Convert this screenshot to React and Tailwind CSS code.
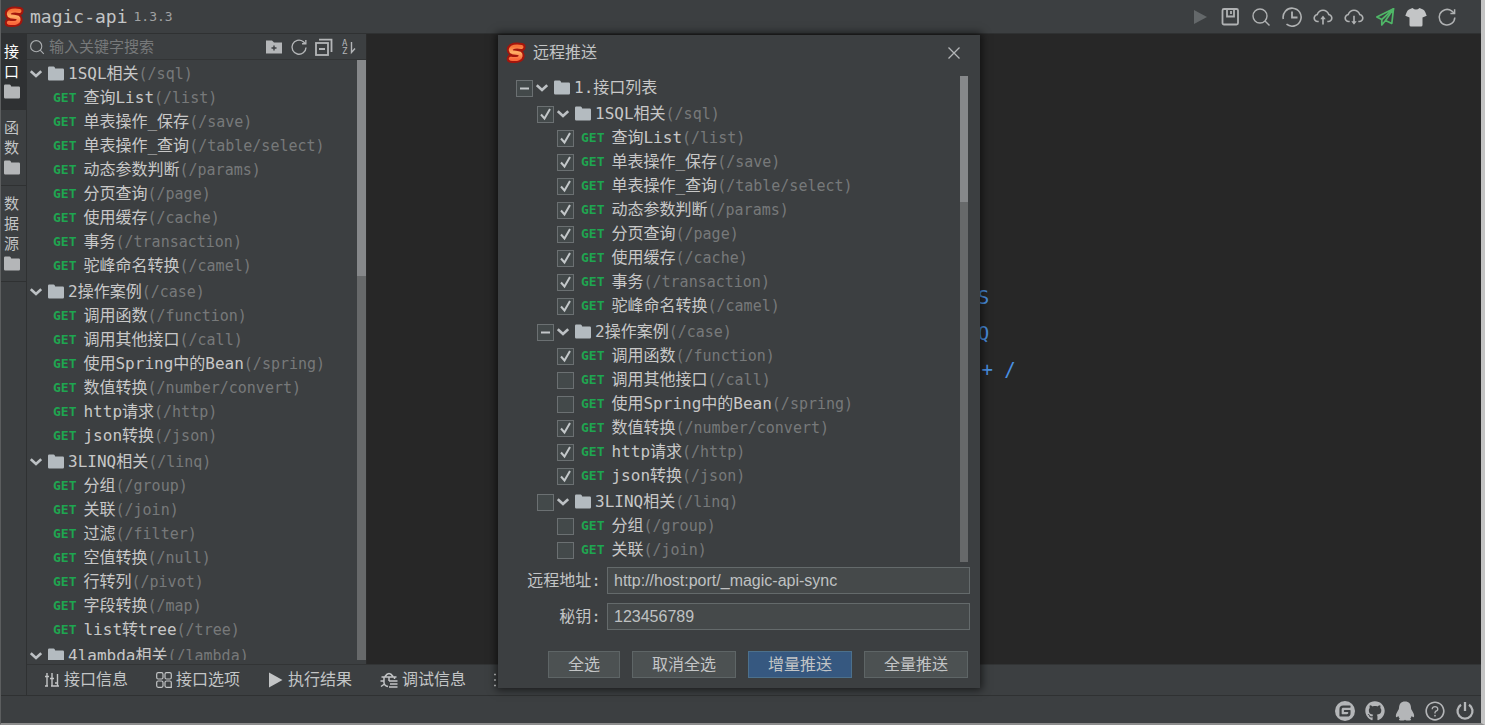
import { useState } from 'react'
import {
  AiOutlineCloudDownload,
  AiOutlineCloudUpload,
  AiOutlineQuestionCircle,
} from 'react-icons/ai'
import { FaGithub } from 'react-icons/fa'
import { SiGitee } from 'react-icons/si'

const GROUPS = [
  {
    name: '1SQL相关',
    path: '/sql',
    items: [
      { name: '查询List', path: '/list' },
      { name: '单表操作_保存', path: '/save' },
      { name: '单表操作_查询', path: '/table/select' },
      { name: '动态参数判断', path: '/params' },
      { name: '分页查询', path: '/page' },
      { name: '使用缓存', path: '/cache' },
      { name: '事务', path: '/transaction' },
      { name: '驼峰命名转换', path: '/camel' },
    ],
  },
  {
    name: '2操作案例',
    path: '/case',
    items: [
      { name: '调用函数', path: '/function' },
      { name: '调用其他接口', path: '/call' },
      { name: '使用Spring中的Bean', path: '/spring' },
      { name: '数值转换', path: '/number/convert' },
      { name: 'http请求', path: '/http' },
      { name: 'json转换', path: '/json' },
    ],
  },
  {
    name: '3LINQ相关',
    path: '/linq',
    items: [
      { name: '分组', path: '/group' },
      { name: '关联', path: '/join' },
      { name: '过滤', path: '/filter' },
      { name: '空值转换', path: '/null' },
      { name: '行转列', path: '/pivot' },
      { name: '字段转换', path: '/map' },
      { name: 'list转tree', path: '/tree' },
    ],
  },
  { name: '4lambda相关', path: '/lambda', items: [] },
]

const ALL_PATHS = GROUPS.flatMap((g) => g.items.map((i) => i.path))

const DEFAULT_SELECTED = [
  ...GROUPS[0].items.map((i) => i.path),
  '/function',
  '/number/convert',
  '/http',
  '/json',
]

const RAIL_TABS = [
  { label: '接口', active: true },
  { label: '函数' },
  { label: '数据源' },
]

const HINTS = [
  { label: '保存', keys: 'Ctrl + S' },
  { label: '测试', keys: 'Ctrl + Q' },
  { label: '代码提示', keys: 'Alt + /' },
]

function Logo({ className }) {
  return (
    <svg viewBox="0 0 20 22" className={className} fill="none" strokeLinecap="round" strokeLinejoin="round" aria-hidden="true">
      <defs>
        <linearGradient id="flame" x1="0" y1="0" x2="0" y2="1">
          <stop offset="0" stopColor="#f9743a" />
          <stop offset="0.45" stopColor="#ffb066" />
          <stop offset="1" stopColor="#fb6a3c" />
        </linearGradient>
      </defs>
      <path d="M15.500 5C12 4.400 8 4.600 6 5.600 4.200 6.800 4.400 9.400 6.600 10.200c2.600.7 5.200.3 7 1.300 1.700 1.200 1.300 3.800-.9 4.800-2.500 1-5.300.9-7.900.4" stroke="#a3150c" strokeWidth="8" />
      <path d="M15.500 5C12 4.400 8 4.600 6 5.600 4.200 6.800 4.400 9.400 6.600 10.200c2.600.7 5.200.3 7 1.300 1.700 1.200 1.300 3.800-.9 4.800-2.500 1-5.300.9-7.900.4" stroke="url(#flame)" strokeWidth="4" />
    </svg>
  )
}

function FolderIcon({ className }) {
  return (
    <svg viewBox="0 0 16 16" className={className} fill="currentColor" aria-hidden="true">
      <path d="M0 1.700Q0 0.500 1.200 0.500H5.500Q6.300 0.500 6.700 1.300L7.200 2.500H14.800Q16 2.500 16 3.700V13.300Q16 14.500 14.800 14.500H1.200Q0 14.500 0 13.300Z" />
    </svg>
  )
}

function ChevronIcon() {
  return (
    <svg viewBox="0 0 12 12" className="size-3" fill="none" stroke="currentColor" strokeWidth="2.600" aria-hidden="true">
      <path d="M0.800 3.200 6 8 11.200 3.200" />
    </svg>
  )
}

function PlayIcon({ className }) {
  return (
    <svg viewBox="0 0 20 20" className={className} fill="currentColor" aria-hidden="true">
      <path d="M5 3 18 10 5 17Z" />
    </svg>
  )
}

function ResultIcon() {
  return (
    <svg viewBox="0 0 16 16" className="size-4" fill="currentColor" aria-hidden="true">
      <path d="M1 0.500 14.500 8 1 15.500Z" />
    </svg>
  )
}

function SaveIcon() {
  return (
    <svg viewBox="0 0 20 20" className="size-5" fill="none" stroke="currentColor" strokeWidth="1.800" aria-hidden="true">
      <rect x="2.500" y="2" width="15.500" height="15.500" rx="1.500" />
      <path d="M7 2.500V9.500H14V2.500M11 4V7" />
    </svg>
  )
}

function SearchIcon({ className }) {
  return (
    <svg viewBox="0 0 20 20" className={className} fill="none" stroke="currentColor" strokeWidth="1.400" aria-hidden="true">
      <circle cx="9" cy="9" r="7" />
      <path d="M14 14 18.500 18.500" />
    </svg>
  )
}

function ClockIcon() {
  return (
    <svg viewBox="0 0 20 20" className="size-5" fill="none" stroke="currentColor" strokeWidth="1.600" aria-hidden="true">
      <path d="M1.300 12A9 9 0 1 1 4.500 17.200" />
      <path d="M10 4.500V10.500H15.500" strokeWidth="1.800" />
    </svg>
  )
}

function SendIcon() {
  return (
    <svg viewBox="0 0 20 20" className="size-5" fill="none" stroke="currentColor" strokeWidth="1.700" strokeLinejoin="round" aria-hidden="true">
      <path d="M18.500 1.800 1.800 10 6.800 12.500Z" />
      <path d="M18.500 1.800 16.800 16.500 10.500 13.500ZM6.800 12.500V18L10.500 13.500" />
    </svg>
  )
}

function ShirtIcon() {
  return (
    <svg viewBox="0 0 22 20" className="-mx-px h-5 w-[22px]" fill="currentColor" aria-hidden="true">
      <path d="M7.500 1Q11 4 14.500 1L18 2.500Q19.500 3.200 20.200 5L21.700 8.800 17.500 10.500V18Q17.500 19.500 16 19.500H6Q4.500 19.500 4.500 18V10.500L0.300 8.800 1.800 5Q2.500 3.200 4 2.500Z" />
    </svg>
  )
}

function RefreshIcon({ className }) {
  return (
    <svg viewBox="0 0 20 20" className={className} fill="none" stroke="currentColor" strokeWidth="1.500" aria-hidden="true">
      <path d="M17.800 10.500A7.800 7.800 0 1 1 14.600 3.900L17 6" />
      <path d="M17.600 2.200V6.400H13.400" />
    </svg>
  )
}

function FolderPlusIcon() {
  return (
    <svg viewBox="0 0 18 18" className="size-[18px]" aria-hidden="true">
      <path d="M1 2.500H7L9 4.500H17V15.500H1Z" fill="currentColor" />
      <path d="M9 7.500V12.500M6.500 10H11.500" stroke="#3c3f41" strokeWidth="1.400" />
    </svg>
  )
}

function CollapseIcon() {
  return (
    <svg viewBox="0 0 18 18" className="size-[18px]" fill="none" stroke="currentColor" strokeWidth="1.800" aria-hidden="true">
      <rect x="1" y="5" width="12" height="12" />
      <path d="M4 1.600H16.500V14M4 11H10" />
    </svg>
  )
}

function SortIcon() {
  return (
    <svg viewBox="0 0 18 18" className="size-[18px]" fill="currentColor" aria-hidden="true">
      <text x="2" y="8" fontSize="9">A</text>
      <text x="2" y="16" fontSize="9">Z</text>
      <path d="M11.500 4V14.500L15 10.500" fill="none" stroke="currentColor" strokeWidth="1.400" />
    </svg>
  )
}

function PenguinIcon() {
  return (
    <svg viewBox="0 0 20 20" className="size-5" fill="currentColor" aria-hidden="true">
      <path d="M10 0.500C6 0.500 4 3.200 4 7 4 8.500 2.500 10 1.500 12.300 0.500 14.600 0.800 16.300 1.500 16.300 2.200 16.300 3 15 3.300 15 3.600 16.200 4.200 17 4.800 17.500 3.300 18.300 3.800 19.500 5.500 19.500H8.500Q9.500 19.500 10 18.700 10.500 19.500 11.500 19.500H14.500C16.200 19.500 16.700 18.300 15.200 17.500 15.800 17 16.400 16.200 16.700 15 17 15 17.800 16.300 18.500 16.300 19.200 16.300 19.500 14.600 18.500 12.300 17.500 10 16 8.500 16 7 16 3.200 14 0.500 10 0.500Z" />
    </svg>
  )
}

function PowerIcon() {
  return (
    <svg viewBox="0 0 20 20" className="size-5" fill="none" stroke="currentColor" strokeWidth="2.300" aria-hidden="true">
      <path d="M6 3.800A7.500 7.500 0 1 0 14 3.800M10 1V10" />
    </svg>
  )
}

function SlidersIcon() {
  return (
    <svg viewBox="0 0 16 16" className="size-4" fill="none" stroke="currentColor" strokeWidth="1.400" aria-hidden="true">
      <path d="M3 1V14M8 1V14M13.500 2V14M1 4.500H5M6 6.500H10" />
      <path d="M1 14H4M7 14H15M11 11H14" />
    </svg>
  )
}

function GridIcon() {
  return (
    <svg viewBox="0 0 16 16" className="size-4" fill="none" stroke="currentColor" strokeWidth="1.200" aria-hidden="true">
      <rect x="0.700" y="0.700" width="6.300" height="6.300" rx="1.500" />
      <rect x="9" y="0.700" width="6.300" height="6.300" rx="1.500" />
      <rect x="0.700" y="9" width="6.300" height="6.300" rx="1.500" />
      <path d="M15.300 15.300H10.500Q9 15.300 9 13.800V10.500Q9 9 10.500 9H13.800Q15.300 9 15.300 10.500V16" />
    </svg>
  )
}

function DebugIcon() {
  return (
    <svg viewBox="0 0 18 16" className="h-4 w-[18px]" fill="none" stroke="currentColor" strokeWidth="1.500" aria-hidden="true">
      <path d="M5 4.500Q9 -1.500 13 4.500M1.500 5H16.500M4 5V11Q4.500 14 8 14.500M14.500 5V7M0.500 9H4M1 14.500 4.500 12M9 5V9" />
      <path d="M9 9H17.500M10 12H17.500M9 15H17.500" />
    </svg>
  )
}

function LogIcon() {
  return (
    <svg viewBox="0 0 16 16" className="size-4" fill="none" stroke="currentColor" strokeWidth="1.500" aria-hidden="true">
      <path d="M0 2.500H2M0 8H2M0 13.500H2M5 2.500H15M5 8H15M5 13.500H15" />
    </svg>
  )
}

const BOTTOM_TABS = [
  { label: '接口信息', icon: <SlidersIcon /> },
  { label: '接口选项', icon: <GridIcon /> },
  { label: '执行结果', icon: <ResultIcon /> },
  { label: '调试信息', icon: <DebugIcon /> },
]

const TOOLBAR = [
  { label: '运行', icon: <PlayIcon className="size-5" />, color: 'text-[#64686a]' },
  { label: '保存', icon: <SaveIcon /> },
  { label: '搜索', icon: <SearchIcon className="size-5" /> },
  { label: '历史记录', icon: <ClockIcon /> },
  { label: '上传', icon: <AiOutlineCloudUpload className="-mx-px size-[22px]" /> },
  { label: '下载', icon: <AiOutlineCloudDownload className="-mx-px size-[22px]" /> },
  { label: '远程推送', icon: <SendIcon />, color: 'text-[#4fb767]' },
  { label: '皮肤', icon: <ShirtIcon />, color: 'text-[#c3c5c6]' },
  { label: '刷新', icon: <RefreshIcon className="size-5" /> },
]

function NodeText({ name, path }) {
  return (
    <span className="whitespace-nowrap">
      <span className="text-base leading-6 text-[#c8c8c8]">{name}</span>
      {path && <span className="text-[15px] leading-6 text-[#77797a]">({path})</span>}
    </span>
  )
}

function FolderLabel({ name, path, open, onToggle }) {
  return (
    <button type="button" onClick={onToggle} aria-expanded={open} className="flex items-center text-[#bdc1c4]">
      <ChevronIcon />
      <FolderIcon className="mr-1 ml-1.5 size-4 text-[#b4bbc0]" />
      <NodeText name={name} path={path} />
    </button>
  )
}

function ApiLabel({ name, path }) {
  return (
    <>
      <span className="mr-[7px] text-[13px] leading-6 font-bold text-[#1fa550]">GET</span>
      <NodeText name={name} path={path} />
    </>
  )
}

function CheckBox({ state, label, onChange }) {
  return (
    <span className="grid size-[17px] shrink-0 *:col-start-1 *:row-start-1">
      <input
        type="checkbox"
        aria-label={label}
        checked={state === 'all'}
        onChange={onChange}
        className="size-[17px] appearance-none border border-[#6b7072] bg-[#43494a]"
      />
      <svg viewBox="0 0 17 17" className="pointer-events-none size-[17px]" fill="none" stroke="#c3c7c9" strokeWidth="2" aria-hidden="true">
        {state === 'all' && <path d="M4 8.500 7.500 12.500 13 3" />}
        {state === 'some' && <path d="M4 8.500H13" />}
      </svg>
    </span>
  )
}

function Scrollbar({ className, thumbClassName }) {
  return (
    <div className={`shrink-0 bg-[#67696a] ${className}`} aria-hidden="true">
      <div className={`bg-[#86888a] ${thumbClassName}`} />
    </div>
  )
}

function Sidebar() {
  const [closed, setClosed] = useState([])
  const [keyword, setKeyword] = useState('')

  const toggle = (path) =>
    setClosed((c) => (c.includes(path) ? c.filter((p) => p !== path) : [...c, path]))

  return (
    <aside className="flex w-[340px] shrink-0 flex-col border-r border-[#2b2b2b]">
      <div className="flex h-[26px] shrink-0 items-center gap-1 border-b border-[#323435] pr-2 pl-0.5">
        <SearchIcon className="size-4 shrink-0 text-[#aaadaf]" />
        <input
          type="text"
          aria-label="搜索"
          placeholder="输入关键字搜索"
          value={keyword}
          onChange={(e) => setKeyword(e.target.value)}
          className="min-w-0 flex-1 bg-transparent text-[15px] leading-5 outline-none placeholder:text-[#77797a]"
        />
        <div className="flex gap-[7px] text-[#b4b6b8]">
          <button type="button" aria-label="新建分组"><FolderPlusIcon /></button>
          <button type="button" aria-label="刷新"><RefreshIcon className="size-[18px]" /></button>
          <button type="button" aria-label="折叠" onClick={() => setClosed(GROUPS.map((g) => g.path))}>
            <CollapseIcon />
          </button>
          <button type="button" aria-label="排序"><SortIcon /></button>
        </div>
      </div>
      <div className="mb-1 flex min-h-0 flex-1">
        <ul className="min-w-0 flex-1 overflow-y-auto [scrollbar-width:none]">
          {GROUPS.map((g) => (
            <li key={g.path}>
              <div className="flex h-[26px] items-center pt-0.5 pl-[3px]">
                <FolderLabel name={g.name} path={g.path} open={!closed.includes(g.path)} onToggle={() => toggle(g.path)} />
              </div>
              {!closed.includes(g.path) && (
                <ul>
                  {g.items.map((item) => (
                    <li key={item.path} className="flex h-6 items-center pl-[26px]">
                      <ApiLabel name={item.name} path={item.path} />
                    </li>
                  ))}
                </ul>
              )}
            </li>
          ))}
        </ul>
        <Scrollbar className="w-[9px]" thumbClassName="h-[36%]" />
      </div>
    </aside>
  )
}

function PushDialog({ onClose }) {
  const [selected, setSelected] = useState(DEFAULT_SELECTED)
  const [closed, setClosed] = useState([])
  const [host, setHost] = useState('http://host:port/_magic-api-sync')
  const [secret, setSecret] = useState('123456789')

  const stateOf = (paths) => {
    const count = paths.filter((p) => selected.includes(p)).length
    if (count === 0) return 'none'
    return count === paths.length ? 'all' : 'some'
  }
  const toggleAll = (paths) =>
    setSelected((s) =>
      stateOf(paths) === 'all' ? s.filter((p) => !paths.includes(p)) : [...new Set([...s, ...paths])]
    )
  const toggleOpen = (path) =>
    setClosed((c) => (c.includes(path) ? c.filter((p) => p !== path) : [...c, path]))

  const inputClass =
    'h-[27px] min-w-0 flex-1 border border-[#646a6b] bg-[#45494a] px-1.5 font-["Liberation_Sans",sans-serif] text-base leading-6 text-[#bfc1c2] outline-none'
  const buttonClass = 'h-[27px] border px-[19px] text-base leading-6 text-[#c3c5c6]'

  return (
    <section
      role="dialog"
      aria-label="远程推送"
      className="flex max-h-full w-[482px] flex-col bg-[#3c3f41] pb-2.5 shadow-[0_0_8px_2px_rgba(0,0,0,0.6)]"
    >
      <header className="flex h-[41px] shrink-0 items-center pr-[18px] pb-1.5 pl-2">
        <Logo className="h-[22px] w-5" />
        <h2 className="ml-[7px] flex-1 text-base leading-6 text-[#c3c5c6]">远程推送</h2>
        <button type="button" aria-label="关闭" onClick={onClose}>
          <svg viewBox="0 0 16 16" className="size-4" fill="none" stroke="#b4b6b8" strokeWidth="1.300" aria-hidden="true">
            <path d="M2.500 2.500 13.500 13.500M13.500 2.500 2.500 13.500" />
          </svg>
        </button>
      </header>
      <div className="flex h-[486px] min-h-0 pr-3 pl-[18px]">
        <ul className="min-w-0 flex-1 overflow-y-auto [scrollbar-width:none]">
          <li>
            <div className="flex h-6 items-center gap-[3px]">
              <CheckBox state={stateOf(ALL_PATHS)} label="1.接口列表" onChange={() => toggleAll(ALL_PATHS)} />
              <FolderLabel name="1.接口列表" open={!closed.includes('/')} onToggle={() => toggleOpen('/')} />
            </div>
            {!closed.includes('/') &&
              GROUPS.map((g) => {
                const paths = g.items.map((i) => i.path)
                return (
                  <div key={g.path}>
                    <div className="flex h-[26px] items-center gap-[3px] pt-0.5 pl-[21px]">
                      <CheckBox state={stateOf(paths)} label={g.name} onChange={() => toggleAll(paths)} />
                      <FolderLabel name={g.name} path={g.path} open={!closed.includes(g.path)} onToggle={() => toggleOpen(g.path)} />
                    </div>
                    {!closed.includes(g.path) &&
                      g.items.map((item) => (
                        <label key={item.path} className="flex h-6 items-center pl-[41px]">
                          <CheckBox state={stateOf([item.path])} label={item.name} onChange={() => toggleAll([item.path])} />
                          <span className="ml-[7px] flex items-center">
                            <ApiLabel name={item.name} path={item.path} />
                          </span>
                        </label>
                      ))}
                  </div>
                )
              })}
          </li>
        </ul>
        <Scrollbar className="w-2" thumbClassName="h-[26%]" />
      </div>
      <form className="mt-[5px] flex flex-col gap-[9px] pr-2.5 text-base leading-6 text-[#c3c5c6]">
        <div className="flex items-center gap-1.5">
          <label htmlFor="push-host" className="w-[103px] text-right">远程地址:</label>
          <input id="push-host" type="text" value={host} onChange={(e) => setHost(e.target.value)} className={inputClass} />
        </div>
        <div className="flex items-center gap-1.5">
          <label htmlFor="push-secret" className="w-[103px] text-right">秘钥:</label>
          <input id="push-secret" type="text" value={secret} onChange={(e) => setSecret(e.target.value)} className={inputClass} />
        </div>
      </form>
      <footer className="mt-[21px] flex justify-end gap-3 pr-3">
        <button type="button" onClick={() => setSelected(ALL_PATHS)} className={`${buttonClass} border-[#5e6566] bg-[#4c5152]`}>全选</button>
        <button type="button" onClick={() => setSelected([])} className={`${buttonClass} border-[#5e6566] bg-[#4c5152]`}>取消全选</button>
        <button type="button" className={`${buttonClass} border-[#4c708c] bg-[#365880]`}>增量推送</button>
        <button type="button" className={`${buttonClass} border-[#5e6566] bg-[#4c5152]`}>全量推送</button>
      </footer>
    </section>
  )
}

export default function App() {
  const [showPush, setShowPush] = useState(true)

  return (
    <div
      lang="zh-CN"
      className='relative flex h-screen flex-col overflow-hidden border-r-4 border-b-2 border-l border-r-[#c4c4c4] border-b-[#8c8c8c] border-l-[#5c5e5f] bg-[#3c3f41] font-["DejaVu_Sans_Mono","Noto_Sans_CJK_SC",monospace] text-[#c3c5c6]'
    >
      <header className="flex h-[34px] shrink-0 items-center border-b border-[#2f3132] pr-6 pl-[3px]">
        <Logo className="h-[22px] w-5" />
        <h1 className="ml-1.5 text-lg leading-6">magic-api</h1>
        <span className="ml-1.5 text-[13px] leading-6 text-[#a0a2a3]">1.3.3</span>
        <nav className="ml-auto flex gap-[11px]">
          {TOOLBAR.map((t) => (
            <button
              key={t.label}
              type="button"
              aria-label={t.label}
              onClick={t.label === '远程推送' ? () => setShowPush(true) : undefined}
              className={t.color ?? 'text-[#b0b2b3]'}
            >
              {t.icon}
            </button>
          ))}
        </nav>
      </header>

      <div className="flex min-h-0 flex-1">
        <nav className="flex w-[26px] shrink-0 flex-col border-r border-[#2f3132]">
          {RAIL_TABS.map((t) => (
            <button
              key={t.label}
              type="button"
              className={`flex flex-col items-center gap-0.5 border-b border-[#2f3132] pt-2 pr-1 pb-[9px] text-[15px] leading-5 ${
                t.active ? 'bg-[#2f3133] text-white' : 'text-[#c3c5c6]'
              }`}
            >
              <span className="w-[15px] break-all">{t.label}</span>
              <FolderIcon className="size-4 text-[#b4b6b8]" />
            </button>
          ))}
        </nav>

        <div className="flex min-w-0 flex-1 flex-col">
          <div className="flex min-h-0 flex-1">
            <Sidebar />
            <main className="flex min-w-0 flex-1 items-center justify-center bg-[#272727] pb-8 pl-4">
              <ul className="text-[19px] leading-9 text-[#a0a2a3]">
                {HINTS.map((h) => (
                  <li key={h.label}>
                    {h.label} <kbd className="font-[inherit] text-[#4a90e2]">{h.keys}</kbd>
                  </li>
                ))}
              </ul>
            </main>
          </div>
          <div className="flex h-[31px] shrink-0 items-center gap-7 border-t border-[#323435] pl-[17px]">
            {BOTTOM_TABS.map((t) => (
              <button key={t.label} type="button" className="flex items-center gap-1 text-base leading-6">
                {t.icon}
                {t.label}
              </button>
            ))}
            <button type="button" aria-label="运行日志"><LogIcon /></button>
          </div>
        </div>
      </div>

      <footer className="flex h-7 shrink-0 items-center justify-end gap-2.5 border-t border-[#2f3132] pt-0.5 pr-1.5 text-[#b4b6b8]">
        <a href="#gitee" aria-label="Gitee"><SiGitee className="size-5" /></a>
        <a href="#github" aria-label="GitHub"><FaGithub className="size-5" /></a>
        <a href="#qq" aria-label="QQ"><PenguinIcon /></a>
        <a href="#docs" aria-label="帮助文档"><AiOutlineQuestionCircle className="-mx-px size-[22px]" /></a>
        <button type="button" aria-label="退出"><PowerIcon /></button>
      </footer>

      {showPush && (
        <div className="absolute inset-0 flex items-center justify-center pr-1">
          <PushDialog onClose={() => setShowPush(false)} />
        </div>
      )}
    </div>
  )
}
